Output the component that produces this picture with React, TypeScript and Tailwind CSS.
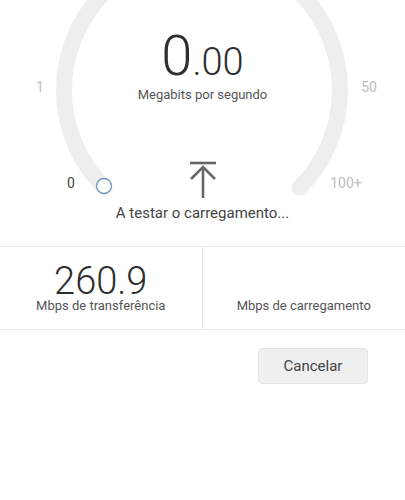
import React from 'react';

const GaugeArc: React.FC = () => (
  <svg className="absolute inset-0" width="405" height="246" viewBox="0 0 405 246">
    {/* trilho do medidor */}
    <path
      d="M 104.4 187.6 A 138 138 0 1 1 299.6 187.6"
      fill="none"
      stroke="#eeeeee"
      strokeWidth="16"
      strokeLinecap="round"
    />
    {/* ponteiro */}
    <circle cx="104" cy="186" r="7.5" fill="#ffffff" stroke="#6b98c2" strokeWidth="1.3" />
  </svg>
);

const UploadIcon: React.FC = () => (
  <svg width="30" height="40" viewBox="0 0 30 40" fill="none" stroke="#666666" strokeWidth="2.6">
    <path d="M 2 3 L 28 3" />
    <path d="M 15 7 L 15 38" />
    <path d="M 3 19 L 15 7 L 27 19" />
  </svg>
);

export default function App() {
  return (
    <div className="w-[405px] h-[500px] bg-white font-['Roboto',sans-serif] overflow-hidden">
      <div className="relative h-[247px] border-b border-[#e6e6e6] flex flex-col items-center">
        <GaugeArc />

        <span className="absolute left-[40px] top-[87px] -translate-x-1/2 -translate-y-1/2 text-[14px] text-[#bdbdbd]">1</span>
        <span className="absolute left-[369px] top-[87px] -translate-x-1/2 -translate-y-1/2 text-[14px] text-[#bdbdbd]">50</span>
        <span className="absolute left-[71px] top-[183px] -translate-x-1/2 -translate-y-1/2 text-[14px] text-[#444444]">0</span>
        <span className="absolute left-[346px] top-[183px] -translate-x-1/2 -translate-y-1/2 text-[14px] text-[#bdbdbd]">100+</span>

        <div className="relative mt-[28px] flex items-baseline font-light text-[#2e2e2e] leading-none">
          <span className="text-[56px]">0</span>
          <span className="text-[38px]">.00</span>
        </div>
        <p className="relative mt-[3px] text-[13px] leading-4 text-[#555555]">Megabits por segundo</p>
        <div className="relative mt-[57px]">
          <UploadIcon />
        </div>
        <p className="relative mt-[3px] text-[15px] leading-5 text-[#444444]">A testar o carregamento...</p>
      </div>

      <div className="grid grid-cols-2 h-[83px] border-b border-[#e6e6e6]">
        <div className="flex flex-col items-center justify-end pb-[16px] border-r border-[#e6e6e6]">
          <span className="text-[38px] leading-[36px] font-light text-[#2e2e2e]">260.9</span>
          <span className="text-[13px] leading-[14px] text-[#555555]">Mbps de transferência</span>
        </div>
        <div className="flex flex-col items-center justify-end pb-[16px]">
          <span className="text-[13px] leading-[14px] text-[#555555]">Mbps de carregamento</span>
        </div>
      </div>

      <div className="flex justify-end pr-[37px] pt-[18px]">
        <button className="w-[110px] h-[36px] rounded-[4px] bg-[#efefef] border border-[#e4e4e4] text-[15px] text-[#444444]">
          Cancelar
        </button>
      </div>
    </div>
  );
}
